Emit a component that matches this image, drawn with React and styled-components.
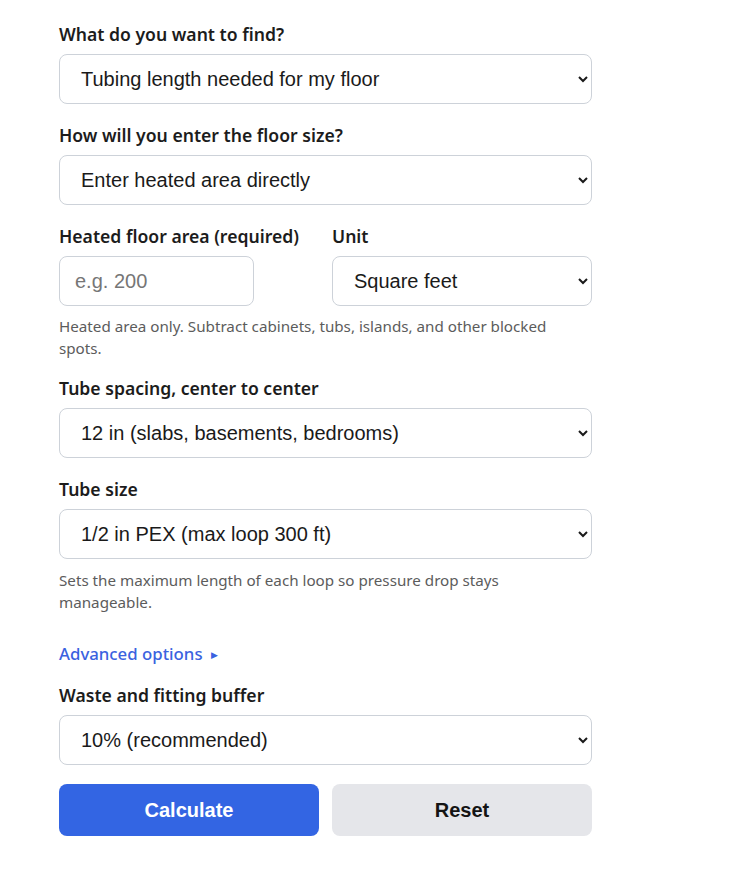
import React from "react"
import styled, {createGlobalStyle, css} from "styled-components"

const GlobalStyle = createGlobalStyle`
    body {
        margin: 0;
        background: #fff;
        font-family: "Noto Sans", "Open Sans", sans-serif;
        color: #1c1c1c;
    }
`

const Form = styled.form`
    width: 533px;
    padding: 22px 0 40px 59px;
    display: flex;
    flex-direction: column;
`

const Field = styled.div`
    display: flex;
    flex-direction: column;
    margin-bottom: ${p => p.$gap ?? 19}px;
`

const Row = styled.div`
    display: grid;
    grid-template-columns: 1fr 1fr;
    column-gap: 13px;
`

const Label = styled.label`
    font-size: 17.6px;
    font-weight: 600;
    line-height: 24px;
    margin-bottom: 8px;
    color: #1c1c1c;
`

const control = css`
    box-sizing: border-box;
    height: 50px;
    border: 1px solid #cdd2d9;
    border-radius: 8px;
    background: #fff;
    font-family: "Liberation Sans", Arial, sans-serif;
    font-size: 20px;
    color: #1a1a1a;
`

const Select = styled.select`
    ${control}
    width: 100%;
    padding: 0 14px 0 17px;
`

const Input = styled.input`
    ${control}
    width: 195px;
    padding: 0 15px;

    &::placeholder {
        color: #767676;
    }
`

const Help = styled.p`
    margin: ${p => p.$top ?? 9}px 0 0;
    font-size: 15.2px;
    line-height: 22px;
    color: #5c5c5c;
`

const Toggle = styled.button`
    align-self: flex-start;
    margin: 29px 0 16px;
    padding: 0;
    border: 0;
    background: none;
    font-family: "Noto Sans", "Open Sans", sans-serif;
    font-size: 16.8px;
    line-height: 24px;
    font-weight: 500;
    color: #3a62e0;
    cursor: pointer;

    span {
        font-size: 9px;
        margin-left: 8px;
        vertical-align: 2px;
    }
`

const Buttons = styled.div`
    display: grid;
    grid-template-columns: 1fr 1fr;
    column-gap: 13px;
`

const Button = styled.button`
    height: 52px;
    border: 0;
    border-radius: 8px;
    font-family: "Liberation Sans", Arial, sans-serif;
    font-size: 20px;
    font-weight: 700;
    cursor: pointer;
    background: ${p => (p.$primary ? "#3365e3" : "#e5e6ea")};
    color: ${p => (p.$primary ? "#fff" : "#141414")};
`

export default function App() {
    return (
        <>
            <GlobalStyle />
            <Form onSubmit={e => e.preventDefault()}>
                <Field>
                    <Label>What do you want to find?</Label>
                    <Select defaultValue="length">
                        <option value="length">Tubing length needed for my floor</option>
                        <option value="area">Floor area a coil can cover</option>
                    </Select>
                </Field>
                <Field>
                    <Label>How will you enter the floor size?</Label>
                    <Select defaultValue="direct">
                        <option value="direct">Enter heated area directly</option>
                        <option value="dims">Enter room dimensions</option>
                    </Select>
                </Field>
                <Field $gap={17}>
                    <Row>
                        <Field $gap={0}>
                            <Label>Heated floor area (required)</Label>
                            <Input type="number" placeholder="e.g. 200" />
                        </Field>
                        <Field $gap={0}>
                            <Label>Unit</Label>
                            <Select defaultValue="sqft">
                                <option value="sqft">Square feet</option>
                                <option value="sqm">Square meters</option>
                            </Select>
                        </Field>
                    </Row>
                    <Help>Heated area only. Subtract cabinets, tubs, islands, and other blocked spots.</Help>
                </Field>
                <Field>
                    <Label>Tube spacing, center to center</Label>
                    <Select defaultValue="12">
                        <option value="6">6 in (bathrooms, high heat loss)</option>
                        <option value="9">9 in (living areas)</option>
                        <option value="12">12 in (slabs, basements, bedrooms)</option>
                    </Select>
                </Field>
                <Field $gap={0}>
                    <Label>Tube size</Label>
                    <Select defaultValue="half">
                        <option value="3/8">3/8 in PEX (max loop 250 ft)</option>
                        <option value="half">1/2 in PEX (max loop 300 ft)</option>
                        <option value="5/8">5/8 in PEX (max loop 400 ft)</option>
                    </Select>
                    <Help $top={10}>Sets the maximum length of each loop so pressure drop stays manageable.</Help>
                </Field>
                <Toggle type="button">
                    Advanced options<span>▶</span>
                </Toggle>
                <Field>
                    <Label>Waste and fitting buffer</Label>
                    <Select defaultValue="10">
                        <option value="5">5%</option>
                        <option value="10">10% (recommended)</option>
                        <option value="15">15%</option>
                    </Select>
                </Field>
                <Buttons>
                    <Button $primary type="submit">Calculate</Button>
                    <Button type="reset">Reset</Button>
                </Buttons>
            </Form>
        </>
    )
}
